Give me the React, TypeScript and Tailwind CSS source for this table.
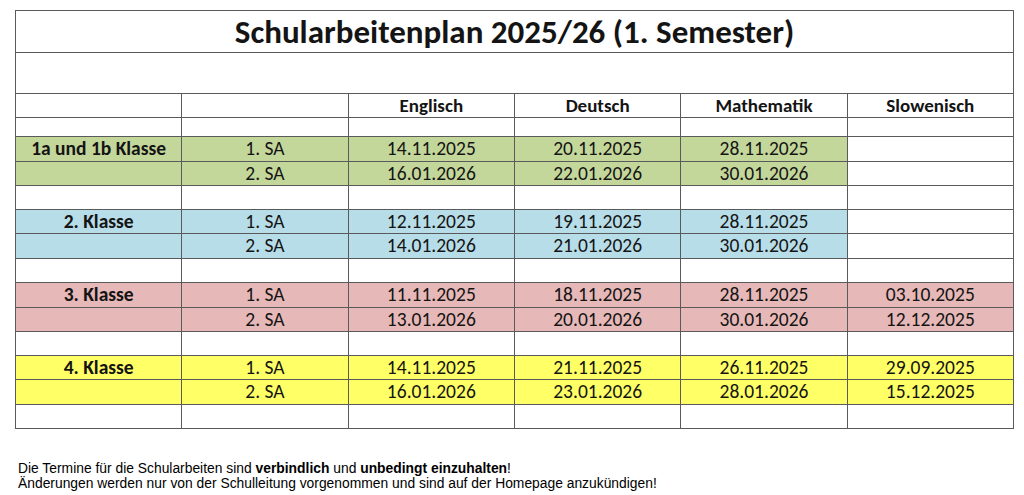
import React from "react";

const FONT = { fontFamily: "Carlito, Calibri, Lato, 'Open Sans', sans-serif" };

type Row = { label?: string; sa?: string; cells?: string[]; bg?: string; h: string };

const rows: Row[] = [
  { h: "h-[19px]" },
  { label: "1a und 1b Klasse", sa: "1. SA", cells: ["14.11.2025", "20.11.2025", "28.11.2025", ""], bg: "bg-[#c4d79b]", h: "h-[25px]" },
  { sa: "2. SA", cells: ["16.01.2026", "22.01.2026", "30.01.2026", ""], bg: "bg-[#c4d79b]", h: "h-[24px]" },
  { h: "h-[24px]" },
  { label: "2. Klasse", sa: "1. SA", cells: ["12.11.2025", "19.11.2025", "28.11.2025", ""], bg: "bg-[#b7dde8]", h: "h-[24px]" },
  { sa: "2. SA", cells: ["14.01.2026", "21.01.2026", "30.01.2026", ""], bg: "bg-[#b7dde8]", h: "h-[25px]" },
  { h: "h-[24px]" },
  { label: "3. Klasse", sa: "1. SA", cells: ["11.11.2025", "18.11.2025", "28.11.2025", "03.10.2025"], bg: "bg-[#e6b8b7]", h: "h-[25px]" },
  { sa: "2. SA", cells: ["13.01.2026", "20.01.2026", "30.01.2026", "12.12.2025"], bg: "bg-[#e6b8b7]", h: "h-[24px]" },
  { h: "h-[24px]" },
  { label: "4. Klasse", sa: "1. SA", cells: ["14.11.2025", "21.11.2025", "26.11.2025", "29.09.2025"], bg: "bg-[#ffff66]", h: "h-[24px]" },
  { sa: "2. SA", cells: ["16.01.2026", "23.01.2026", "28.01.2026", "15.12.2025"], bg: "bg-[#ffff66]", h: "h-[25px]" },
  { h: "h-[24px]" },
];

const cellBase =
  "border-r border-b border-[#5a5a5a] flex items-center justify-center leading-none min-h-0 overflow-hidden";

export default function App() {
  return (
    <div className="w-[1024px] h-[495px] bg-white relative overflow-hidden" style={FONT}>
      <div className="ml-[15px] mt-[10px] w-[999px] border-t border-l border-[#5a5a5a] text-[#141414]">
        <div className={`${cellBase} h-[42px] text-[33px] font-bold pt-[2px]`}>
          Schularbeitenplan 2025/26 (1. Semester)
        </div>
        <div className={`${cellBase} h-[41px]`} />
        <div className="grid grid-cols-6 grid-rows-1 h-[24px]">
          {["", "", "Englisch", "Deutsch", "Mathematik", "Slowenisch"].map((t, i) => (
            <div key={i} className={`${cellBase} text-[19px] font-bold`}>{t}</div>
          ))}
        </div>
        {rows.map((r, i) => {
          const cells = r.cells ?? ["", "", "", ""];
          const hasLast = cells[3] !== "";
          return (
            <div key={i} className={`grid grid-cols-6 grid-rows-1 ${r.h}`}>
              <div className={`${cellBase} ${r.bg ?? ""} text-[19.5px] font-bold`}>{r.label ?? ""}</div>
              <div className={`${cellBase} ${r.bg ?? ""} text-[19.5px]`}>{r.sa ?? ""}</div>
              {cells.map((c, j) => (
                <div
                  key={j}
                  className={`${cellBase} ${j < 3 || hasLast ? r.bg ?? "" : ""} text-[19.5px]`}
                >
                  {c}
                </div>
              ))}
            </div>
          );
        })}
      </div>
      <div
        className="absolute left-[18px] top-[461px] text-[13.85px] leading-[15px] text-black whitespace-nowrap"
        style={{ fontFamily: "'Liberation Sans', Arial, sans-serif" }}
      >
        <div>
          Die Termine für die Schularbeiten sind <b>verbindlich</b> und <b>unbedingt einzuhalten</b>!
        </div>
        <div>Änderungen werden nur von der Schulleitung vorgenommen und sind auf der Homepage anzukündigen!</div>
      </div>
    </div>
  );
}
